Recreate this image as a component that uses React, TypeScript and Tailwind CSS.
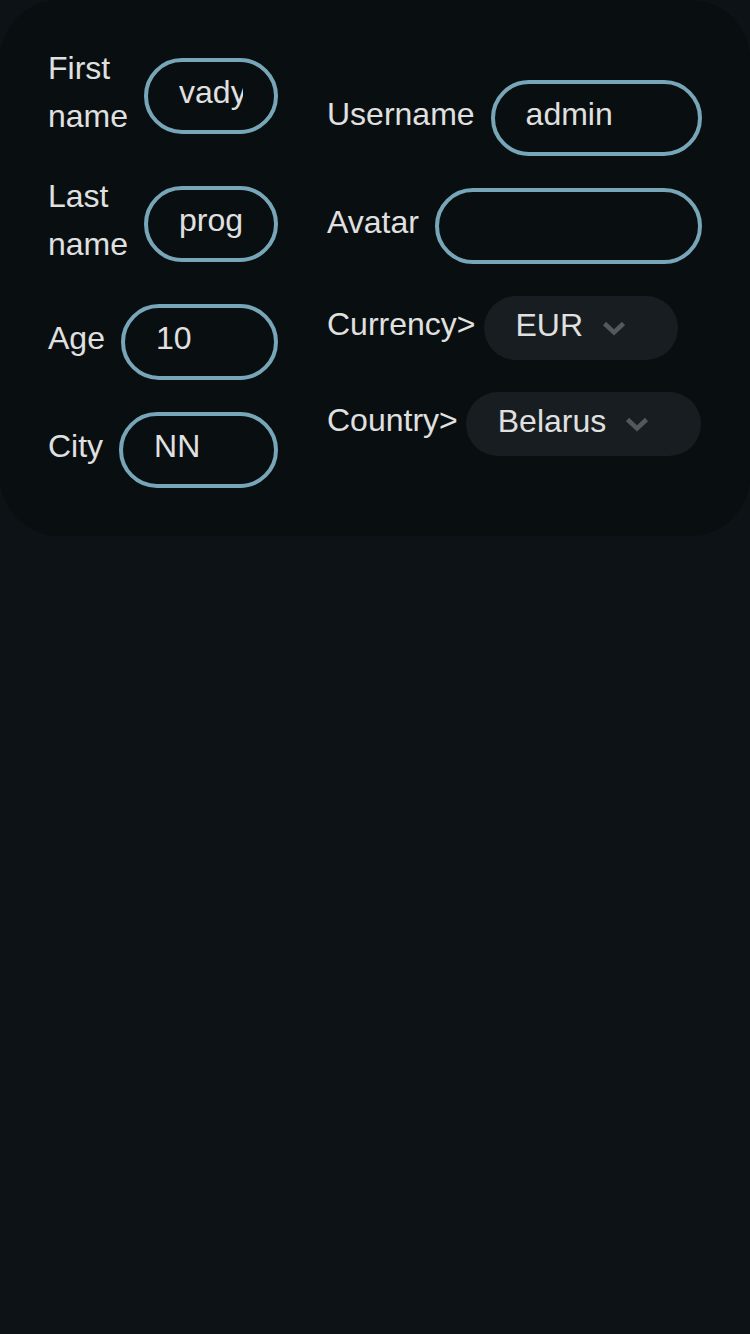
import { ChangeEvent, useState } from "react";

type Field = { label: string; value: string };

const LEFT_FIELDS: Field[] = [
  { label: "First name", value: "vadym" },
  { label: "Last name", value: "prog" },
  { label: "Age", value: "10" },
  { label: "City", value: "NN" },
];

const RIGHT_FIELDS: Field[] = [
  { label: "Username", value: "admin" },
  { label: "Avatar", value: "" },
];

function Chevron() {
  return (
    <svg width="24" height="16" viewBox="0 0 24 16" fill="none" aria-hidden>
      <path
        d="M2.5 3.5 L12 12.5 L21.5 3.5"
        stroke="#53585b"
        strokeWidth="4.5"
        strokeLinejoin="miter"
      />
    </svg>
  );
}

function TextRow({ label, value }: Field) {
  const [text, setText] = useState(value);

  return (
    <div className="flex items-center gap-4">
      <span className="-translate-y-[4px]">{label}</span>
      <input
        value={text}
        onChange={(event: ChangeEvent<HTMLInputElement>) =>
          setText(event.target.value)
        }
        className="min-w-0 flex-[1_1_260px] rounded-full border-4 border-[#77a6b8] bg-transparent px-[31px] pt-[6px] pb-[14px] leading-[48px] text-[#e0e0e0] outline-none"
      />
    </div>
  );
}

function SelectRow({ label, value }: Field) {
  return (
    <div className="flex items-center gap-2">
      <span className="-translate-y-[4px]">{label}</span>
      <button
        type="button"
        className="flex h-16 items-center gap-[19px] rounded-full bg-[#171d20] pr-[52px] pl-[32px]"
      >
        <span className="pb-[6px] leading-[48px]">{value}</span>
        <Chevron />
      </button>
    </div>
  );
}

export default function App() {
  return (
    <div className="min-h-screen bg-[#0c1215] font-['Liberation_Sans',Arial,sans-serif] text-[32px] leading-[48px] text-[#e0e0e0]">
      <div className="flex items-center justify-between rounded-[60px] bg-[#090e10] p-12">
        <div className="flex w-[230px] flex-col gap-8">
          {LEFT_FIELDS.map((field) => (
            <TextRow key={field.label} {...field} />
          ))}
        </div>

        <div className="flex w-[375px] flex-col gap-8">
          {RIGHT_FIELDS.map((field) => (
            <TextRow key={field.label} {...field} />
          ))}
          <SelectRow label="Currency>" value="EUR" />
          <SelectRow label="Country>" value="Belarus" />
        </div>
      </div>
    </div>
  );
}
